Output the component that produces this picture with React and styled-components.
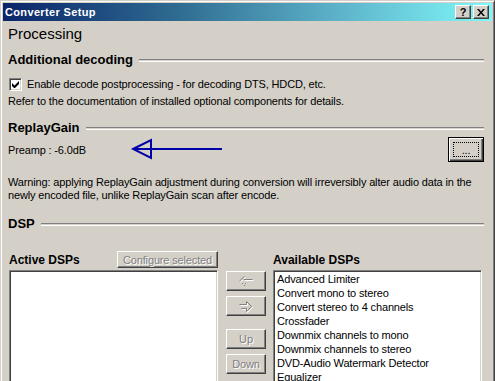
import React from "react";
import styled, { createGlobalStyle } from "styled-components";

const GlobalStyle = createGlobalStyle`
  html, body {
    margin: 0;
    padding: 0;
    background: #d4d0c8;
  }
  body {
    font-family: "Liberation Sans", Arial, sans-serif;
    font-size: 11px;
    letter-spacing: -0.15px;
    color: #000;
  }
`;

const AVAILABLE = [
  "Advanced Limiter",
  "Convert mono to stereo",
  "Convert stereo to 4 channels",
  "Crossfader",
  "Downmix channels to mono",
  "Downmix channels to stereo",
  "DVD-Audio Watermark Detector",
  "Equalizer",
];

const LeftArrowIcon = () => (
  <svg width="16" height="12" viewBox="0 0 16 12">
    <path d="M6.5 1.5L1.5 6 M5.5 4.5H14.5" stroke="#fff" transform="translate(1 1)" />
    <path d="M6.5 1.5L1.5 6 M5.5 4.5H14.5" stroke="#808080" />
    <path d="M4 8.5h1M7 8.5h1M6 10.5h1" stroke="#808080" />
  </svg>
);

const RightArrowIcon = () => (
  <svg width="16" height="13" viewBox="0 0 16 13">
    <path d="M1.5 4.5H8.5V1.5L13.5 6.5L8.5 11.5V8.5H3.5" stroke="#fff" fill="none" transform="translate(1 1)" />
    <path d="M1.5 4.5H8.5V1.5L13.5 6.5L8.5 11.5V8.5H3.5" stroke="#808080" fill="none" />
  </svg>
);

const App = () => {
  return (
    <>
      <GlobalStyle />
      <Window>
        <TitleBar>
          <Title>Converter Setup</Title>
          <CaptionButtons>
            <CaptionButton>?</CaptionButton>
            <CaptionButton>
              <svg width="8" height="7" viewBox="0 0 8 7">
                <path d="M0 0h2l2 2.5L6 0h2L5 3.5 8 7H6L4 4.5 2 7H0l3-3.5z" fill="#000" />
              </svg>
            </CaptionButton>
          </CaptionButtons>
        </TitleBar>

        <Body>
          <PageTitle>Processing</PageTitle>

          <SectionHeader mgt={9}>
            <SectionLabel>Additional decoding</SectionLabel>
            <Etched />
          </SectionHeader>
          <CheckRow>
            <CheckBox>
              <svg width="7" height="7" viewBox="0 0 7 7">
                <path d="M0 2v3l2 2h1l4-4V0L2.5 4.5z" fill="#000" />
              </svg>
            </CheckBox>
            <span>Enable decode postprocessing - for decoding DTS, HDCD, etc.</span>
          </CheckRow>
          <TextLine>Refer to the documentation of installed optional components for details.</TextLine>

          <SectionHeader mgt={12}>
            <SectionLabel>ReplayGain</SectionLabel>
            <Etched />
          </SectionHeader>
          <PreampRow>
            <Preamp>Preamp : -6.0dB</Preamp>
            <Pointer width="92" height="22" viewBox="0 0 92 22">
              <path d="M2 11H91" stroke="#0000a8" strokeWidth="2" />
              <path d="M2 11L20 2V20Z" stroke="#0000a8" strokeWidth="2" fill="none" />
            </Pointer>
            <DefaultButton>
              <FocusRing>...</FocusRing>
            </DefaultButton>
          </PreampRow>
          <Warning>
            Warning: applying ReplayGain adjustment during conversion will irreversibly alter audio data in the
            newly encoded file, unlike ReplayGain scan after encode.
          </Warning>

          <SectionHeader mgt={14}>
            <SectionLabel>DSP</SectionLabel>
            <Etched />
          </SectionHeader>

          <DspGrid>
            <ColumnHead>
              <ListLabel>Active DSPs</ListLabel>
              <Button disabled w={101} h={17}>
                Configure selected
              </Button>
            </ColumnHead>
            <div />
            <ColumnHead shift={-1}>
              <ListLabel>Available DSPs</ListLabel>
            </ColumnHead>

            <ListBox />
            <MoveButtons>
              <Button disabled w={40} h={20}>
                <LeftArrowIcon />
              </Button>
              <Button disabled w={40} h={20}>
                <RightArrowIcon />
              </Button>
              <Button disabled w={40} h={20} mgt={8}>
                Up
              </Button>
              <Button disabled w={40} h={20}>
                Down
              </Button>
            </MoveButtons>
            <ListBox shift={-1}>
              {AVAILABLE.map((name) => (
                <ListItem key={name}>{name}</ListItem>
              ))}
            </ListBox>
          </DspGrid>
        </Body>
      </Window>
    </>
  );
};

const Window = styled.div`
  box-sizing: border-box;
  width: 495px;
  height: 381px;
  overflow: hidden;
  padding: 2px 2px 0 2px;
  border: 1px solid #d4d0c8;
  border-right-color: #404040;
  border-bottom: none;
  box-shadow: inset 1px 1px #fff, inset -1px 0 #808080;
  background: #d4d0c8;
  display: flex;
  flex-direction: column;
`;

const TitleBar = styled.div`
  height: 18px;
  flex: none;
  display: flex;
  align-items: center;
  justify-content: space-between;
  padding: 0 3px 0 2px;
  background: linear-gradient(to right, #0a246a 0%, #2e6a90 35%, #5fb6cc 70%, #80f8f8 100%);
`;

const Title = styled.span`
  color: #fff;
  font-weight: bold;
  font-size: 11px;
  letter-spacing: 0.35px;
`;

const CaptionButtons = styled.div`
  display: flex;
  gap: 2px;
`;

const CaptionButton = styled.div`
  box-sizing: border-box;
  width: 16px;
  height: 14px;
  display: flex;
  align-items: center;
  justify-content: center;
  background: #d4d0c8;
  border: 1px solid;
  border-color: #fff #404040 #404040 #fff;
  box-shadow: inset -1px -1px #808080;
  font-weight: bold;
  font-size: 11px;
  line-height: 1;
`;

const Body = styled.div`
  flex: 1;
  padding: 0 8px 0 5px;
  display: flex;
  flex-direction: column;
`;

const PageTitle = styled.div`
  margin-top: 4px;
  font-size: 15px;
  line-height: 18px;
  letter-spacing: 0;
`;

const SectionHeader = styled.div`
  margin-top: ${(p) => p.mgt || 0}px;
  display: flex;
  align-items: center;
  gap: 6px;
  height: 16px;
`;

const SectionLabel = styled.span`
  font-size: 13px;
  font-weight: bold;
  line-height: 16px;
  letter-spacing: 0;
`;

const Etched = styled.div`
  flex: 1;
  height: 1px;
  border-top: 1px solid #808080;
  border-bottom: 1px solid #fff;
`;

const CheckRow = styled.label`
  margin-top: 8px;
  height: 16px;
  display: flex;
  align-items: center;
  gap: 5px;
  padding-left: 1px;
`;

const CheckBox = styled.span`
  box-sizing: border-box;
  width: 13px;
  height: 13px;
  display: flex;
  align-items: center;
  justify-content: center;
  background: #fff;
  border: 1px solid;
  border-color: #808080 #fff #fff #808080;
  box-shadow: inset 1px 1px #404040, inset -1px -1px #d4d0c8;
`;

const TextLine = styled.div`
  margin-top: 2px;
  line-height: 14px;
`;

const PreampRow = styled.div`
  margin-top: 1px;
  height: 25px;
  display: flex;
  align-items: center;
`;

const Preamp = styled.span`
  width: 123px;
`;

const Pointer = styled.svg`
  flex: none;
  margin-top: -1px;
`;

const DefaultButton = styled.div`
  box-sizing: border-box;
  margin-left: auto;
  width: 36px;
  height: 25px;
  border: 1px solid #000;
  background: #d4d0c8;
  box-shadow: inset 1px 1px #fff, inset -1px -1px #404040, inset -2px -2px #808080;
  padding: 4px;
  display: flex;
`;

const FocusRing = styled.div`
  flex: 1;
  border: 1px dotted #000;
  display: flex;
  align-items: center;
  justify-content: center;
  line-height: 1;
  padding-top: 2px;
`;

const Warning = styled.div`
  margin-top: 14px;
  line-height: 13px;
`;

const DspGrid = styled.div`
  margin-top: 17px;
  margin-left: 1px;
  display: grid;
  grid-template-columns: 209px 40px 208px;
  grid-template-rows: 21px 200px;
  column-gap: 8px;
`;

const ColumnHead = styled.div`
  margin-left: ${(p) => p.shift || 0}px;
  display: flex;
  align-items: center;
  justify-content: space-between;
`;

const ListLabel = styled.span`
  font-weight: bold;
  font-size: 12px;
  letter-spacing: 0;
`;

const Button = styled.div`
  box-sizing: border-box;
  width: ${(p) => p.w}px;
  height: ${(p) => p.h}px;
  margin-top: ${(p) => p.mgt || 0}px;
  display: flex;
  align-items: center;
  justify-content: center;
  background: #d4d0c8;
  border: 1px solid;
  border-color: #fff #404040 #404040 #fff;
  box-shadow: inset -1px -1px #808080;
  color: ${(p) => (p.disabled ? "#808080" : "#000")};
  text-shadow: ${(p) => (p.disabled ? "1px 1px #fff" : "none")};
  font-size: 11px;
  white-space: nowrap;
`;

const MoveButtons = styled.div`
  display: flex;
  flex-direction: column;
  gap: 5px;
  padding-top: 1px;
`;

const ListBox = styled.div`
  box-sizing: border-box;
  margin-left: ${(p) => p.shift || 0}px;
  background: #fff;
  border: 1px solid;
  border-color: #808080 #fff #fff #808080;
  box-shadow: inset 1px 1px #404040, inset -1px -1px #d4d0c8;
  padding: 1px 3px;
`;

const ListItem = styled.div`
  line-height: 14px;
  white-space: nowrap;
`;

export default App;
